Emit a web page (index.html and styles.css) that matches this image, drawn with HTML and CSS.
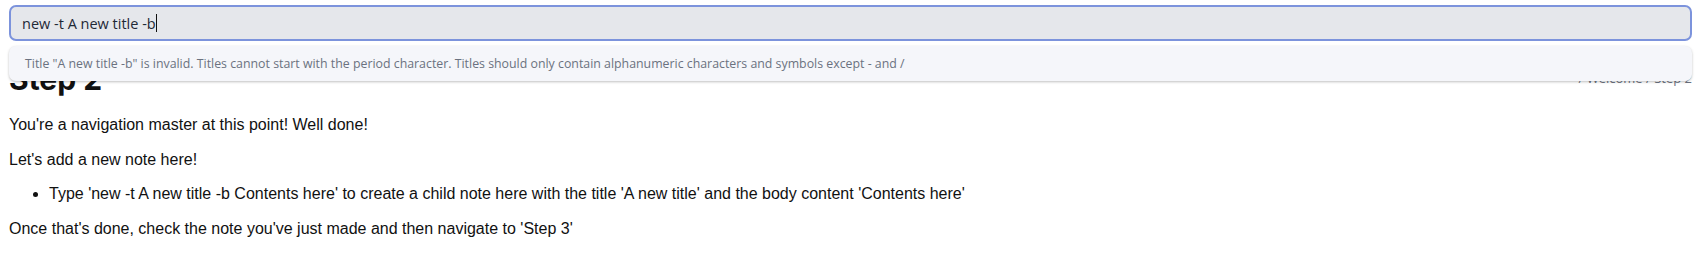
FILE: index.html
```html
<!DOCTYPE html>
<html lang="en">
<head>
    <meta charset="UTF-8">
    <title>Step 2</title>
    <link rel="stylesheet" href="styles.css">
</head>
<body>
    <!-- Command palette over the note -->
    <div class="palette">
        <div class="palette-input">
            <span class="typed">new -t A new title -b</span><span class="caret"></span>
        </div>
        <div class="palette-hint">
            Title "A new title -b" is invalid. Titles cannot start with the period character. Titles should only contain alphanumeric characters and symbols except - and /
        </div>
    </div>

    <div class="note">
        <div class="note-header">
            <h1 class="note-title">Step 2</h1>
            <div class="crumbs">/ Welcome / Step 2</div>
        </div>
        <p>You're a navigation master at this point! Well done!</p>
        <p>Let's add a new note here!</p>
        <ul>
            <li>Type 'new -t A new title -b Contents here' to create a child note here with the title 'A new title' and the body content 'Contents here'</li>
        </ul>
        <p>Once that's done, check the note you've just made and then navigate to 'Step 3'</p>
    </div>
</body>
</html>
```

FILE: styles.css
```css
body {
    margin: 0;
    background: #fff;
    font-family: "Liberation Sans", Arial, sans-serif;
    color: #111;
}

.palette {
    position: absolute;
    top: 5px;
    left: 9px;
    right: 13px;
    z-index: 10;
}
.palette-input {
    display: flex;
    align-items: center;
    height: 36px;
    box-sizing: border-box;
    padding: 0 11px;
    background: #e5e7eb;
    border: 2px solid #7c93dc;
    border-radius: 7px;
    font-family: "Open Sans", "Noto Sans", sans-serif;
    font-size: 14.5px;
    color: #1f2937;
}
.caret {
    display: inline-block;
    width: 1px;
    height: 18px;
    background: #111;
}
.palette-hint {
    margin-top: 5px;
    height: 35px;
    box-sizing: border-box;
    padding: 0 16px;
    display: flex;
    align-items: center;
    background: #f5f6fa;
    border-radius: 7px;
    box-shadow: 0 1px 3px rgba(0, 0, 0, .18), 0 1px 2px rgba(0, 0, 0, .08);
    font-family: "Open Sans", "Noto Sans", sans-serif;
    font-size: 12.35px;
    color: #6b7280;
}

.note {
    padding: 0 13px 0 9px;
}
.note-header {
    display: flex;
    justify-content: space-between;
    align-items: flex-end;
    padding-top: 62px;
    padding-bottom: 4px;
}
.note-title {
    margin: 0;
    font-family: Inter, "Liberation Sans", sans-serif;
    font-size: 30px;
    font-weight: 700;
    line-height: 34px;
    color: #111;
}
.crumbs {
    font-family: "Open Sans", sans-serif;
    font-size: 13px;
    line-height: 16px;
    color: #6b7280;
    margin-bottom: 10px;
}
p { margin: 16px 0; font-size: 16px; line-height: 18.5px; }
ul { margin: 16px 0; padding-left: 40px; font-size: 16px; line-height: 18.5px; }
```
